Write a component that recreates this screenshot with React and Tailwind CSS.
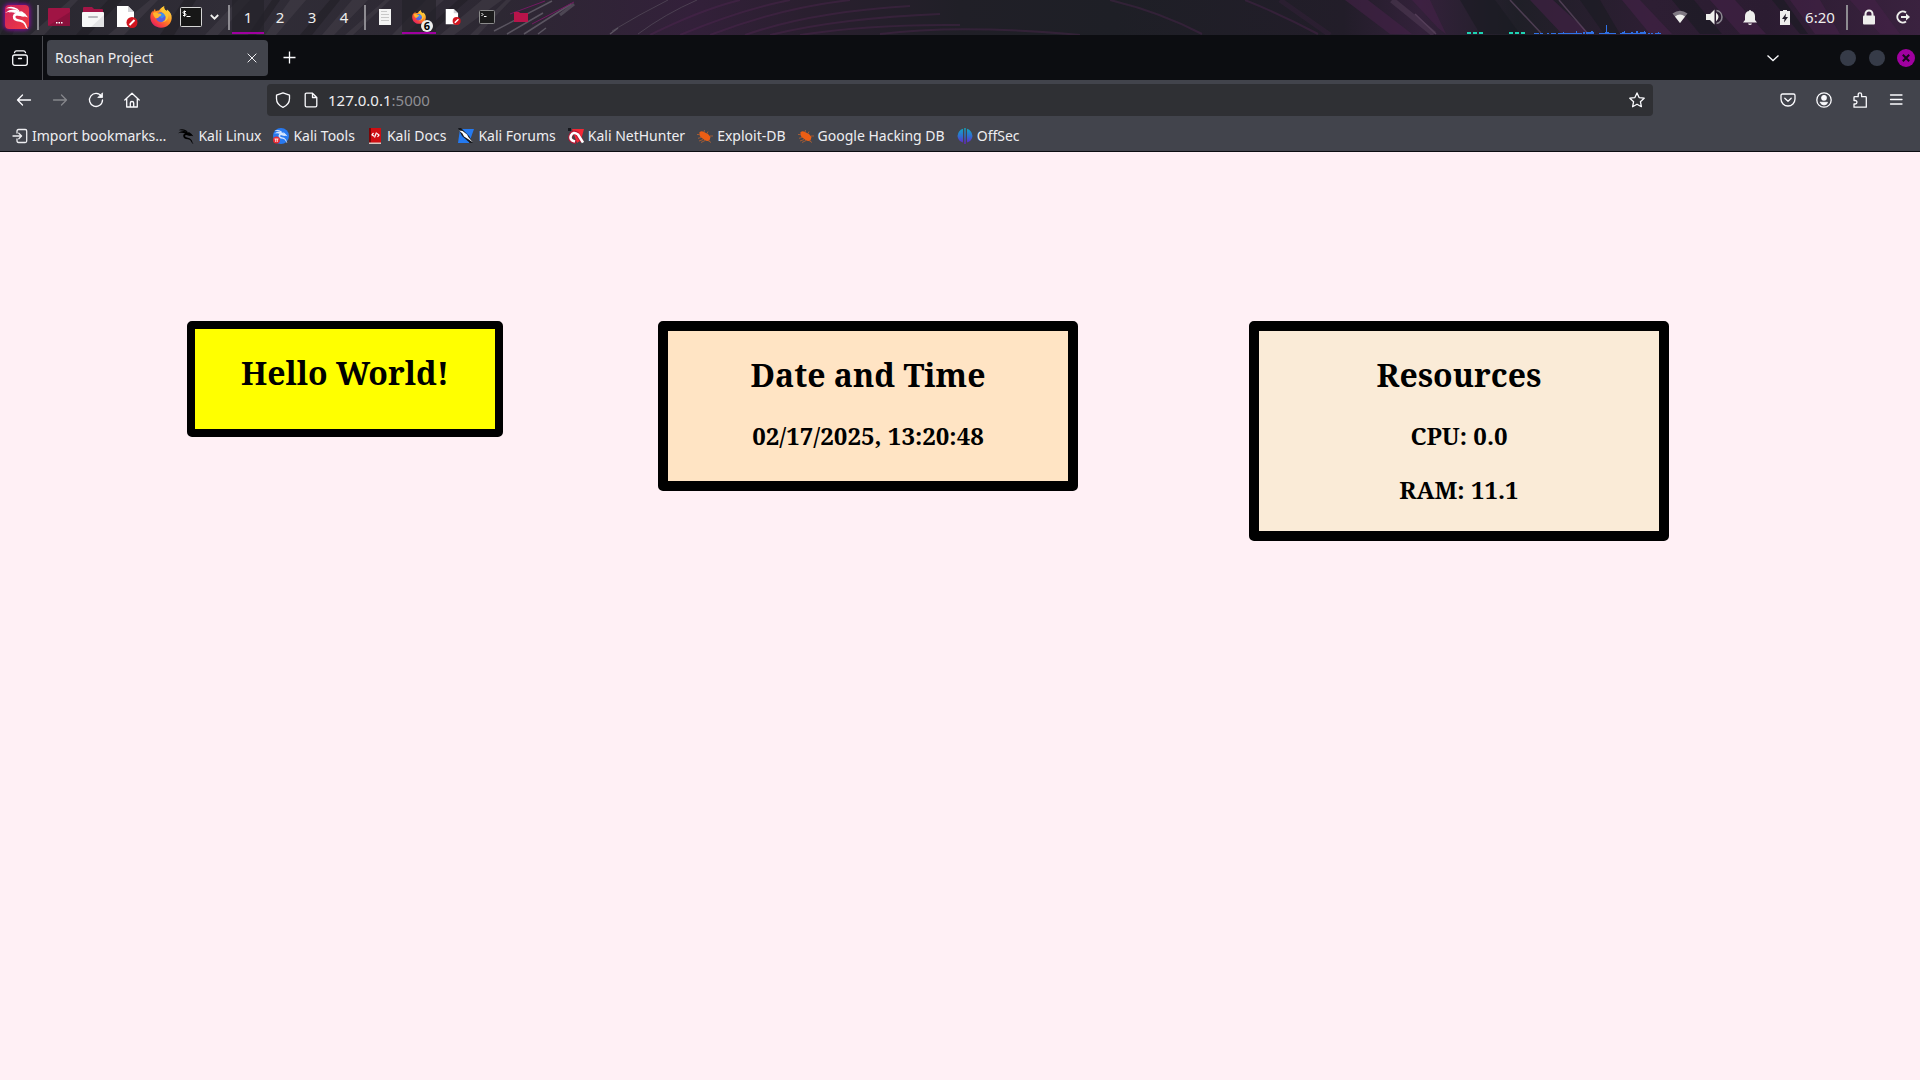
import React from "react";

const uiFont = "font-['Noto_Sans',sans-serif]";
const pageFont = "font-['Noto_Serif','DejaVu_Serif_Condensed','DejaVu_Serif',serif]";

function Wallpaper() {
  return (
    <svg className="absolute inset-0 h-full w-full" viewBox="0 0 1920 35" preserveAspectRatio="none" aria-hidden="true">
      <defs>
        <linearGradient id="sky" x1="0" x2="1" y1="0" y2="0">
          <stop offset="0" stopColor="#29272f" />
          <stop offset="0.12" stopColor="#302d37" />
          <stop offset="0.26" stopColor="#2d2833" />
          <stop offset="0.36" stopColor="#33203a" />
          <stop offset="0.42" stopColor="#2a1f2f" />
          <stop offset="0.5" stopColor="#201f27" />
          <stop offset="0.58" stopColor="#1e1f26" />
          <stop offset="0.7" stopColor="#221d29" />
          <stop offset="0.74" stopColor="#33213a" />
          <stop offset="0.79" stopColor="#1f1f27" />
          <stop offset="0.86" stopColor="#2d1e33" />
          <stop offset="0.92" stopColor="#2b1c31" />
          <stop offset="1" stopColor="#3a223f" />
        </linearGradient>
      </defs>
      <rect width="1920" height="35" fill="url(#sky)" />
      <g fill="#4a4751" opacity="0.4">
        <path d="M30 35 70 0 78 0 44 35ZM108 35 150 0 158 0 124 35ZM205 35 238 0 250 0 218 35ZM265 35 290 0 306 0 276 35ZM322 35 352 0 368 0 334 35ZM345 35 385 0 390 0 353 35ZM392 35 426 0 444 0 404 35ZM440 35 482 0 502 0 454 35ZM470 35 506 0 511 0 478 35Z" />
      </g>
      <g fill="#1d1b22" opacity="0.5">
        <path d="M0 35 20 0 30 0 12 35ZM76 35 108 0 122 0 88 35ZM160 35 184 0 196 0 174 35ZM248 35 272 0 280 0 256 35ZM300 35 330 0 340 0 312 35ZM420 35 458 0 468 0 428 35Z" />
      </g>
      <g fill="none" stroke="#6a6570" opacity="0.75">
        <path d="M494 31 552 1M507 34 543 13M524 34 571 4M538 34 546 28M610 34 618 28" strokeWidth="1.5" />
        <path d="M560 15 574 4" strokeWidth="3" opacity="0.7" />
        <path d="M638 34 Q665 14 697 0M612 31 Q640 14 668 0" strokeWidth="1" opacity="0.6" />
        <path d="M532 24 574 2M510 14 545 1" stroke="#8b1572" strokeWidth="1" />
      </g>
      <g fill="none" stroke="#5a2859" opacity="0.35">
        <path d="M650 35Q700 10 740 0M680 35Q740 10 790 0M710 35Q780 8 850 0M745 35Q810 12 910 6M770 35Q840 18 940 14M800 35Q870 24 960 25M880 34Q960 24 1080 35M1110 0Q1160 12 1202 34M1245 0Q1280 14 1318 34" strokeWidth="2" />
        <path d="M1280 0 1330 35" strokeWidth="5" opacity="0.5" />
      </g>
      <g fill="#452248" opacity="0.6">
        <path d="M1345 0 1390 34 1412 34 1368 0ZM1412 0 1438 28 1446 34 1430 0ZM1530 0 1562 34 1590 34 1553 0ZM1622 0 1650 34 1672 34 1640 0ZM1710 0 1740 34 1766 34 1735 0ZM1790 0 1815 34 1840 34 1820 0ZM1850 0 1880 34 1900 34 1875 0Z" />
      </g>
      <g fill="#191b22" opacity="0.6">
        <path d="M1460 0 1480 34 1520 34 1495 0ZM1580 0 1604 34 1620 34 1600 0ZM1672 0 1700 34 1722 34 1694 0ZM1772 0 1800 34 1808 34 1784 0Z" />
      </g>
      <g fill="none" stroke="#6b526e" opacity="0.6">
        <path d="M1392 0 1434 34" strokeWidth="6" opacity="0.5" />
        <path d="M1510 0 1541 33M1559 0 1588 34M1415 14 1436 34" strokeWidth="1.5" />
      </g>
      <path fill="#1ed3b3" d="M1467 32h4v2h-4zM1473 32h4v2h-4zM1479 32h4v2h-4zM1509 32h4v2h-4zM1515 32h4v2h-4zM1521 32h4v2h-4z" />
      <path
        fill="#2f72e8"
        d="M1534 33h5v1h-5zM1540 33h3v1h-3zM1547 33h2v1h-2zM1551 33h5v1h-5zM1558 33h24v1h-24zM1563 32h1v1h-1zM1576 31h1v2h-1zM1583 32h2v2h-2zM1586 32h8v2h-8zM1591 31h2v1h-2zM1599 33h17v1h-17zM1605 32h4v1h-4zM1606 25h1v8h-1zM1620 33h26v1h-26zM1622 32h3v1h-3zM1624 31h1v1h-1zM1631 32h2v1h-2zM1636 31h2v2h-2zM1640 32h6v1h-6zM1644 31h1v1h-1zM1648 33h2v1h-2zM1651 33h2v1h-2zM1655 33h6v1h-6zM1658 32h1v1h-1z"
      />
    </svg>
  );
}

function Dragon({ className }) {
  return (
    <svg className={className} viewBox="0 0 24 24" fill="currentColor" aria-hidden="true">
      <path d="M1 3.500Q4 1 9 2.200 13 3.200 15 6.500L13 6Q9 2.800 1 3.500Z" />
      <path d="M0 8Q5 3.800 11 4.800L16.500 7.500 20 8.500 23 12.500 21.500 12 20 11.500 17 11.500Q12 9.500 10.500 11.300 10 13.700 13.500 14.300 18 14.800 20 17.500 21.500 19.500 22 22.500L23.500 24Q20.500 23.500 20 20.500 18.800 17.500 15 16.800 7.500 16.300 7.800 11.200 8.200 8.500 11 7.800 6 5.800 0 8Z" />
      <path d="M3.500 7.500Q6 5.500 11 6.500L10.500 8Q7 6.800 3.500 7.500ZM15 6Q17.500 5.700 19.500 8.500L17 9ZM11 8.500 17.500 9 19.500 11.500 12.500 10.500Z" />
    </svg>
  );
}

function Firefox({ className }) {
  return (
    <svg className={className} viewBox="0 0 22 22" aria-hidden="true">
      <defs>
        <linearGradient id="fx" x1="0.85" y1="0.1" x2="0.2" y2="0.9">
          <stop offset="0" stopColor="#ffe14a" />
          <stop offset="0.45" stopColor="#ff8a22" />
          <stop offset="0.8" stopColor="#f8433f" />
          <stop offset="1" stopColor="#e4245e" />
        </linearGradient>
      </defs>
      <path fill="url(#fx)" d="M14.2.3c-.5 2 .5 3.200 1.700 4.300.6-.1.8.2.9.5l.2-1.500c3 2 5 4.900 4.700 8.600C21.300 17.600 17 21.700 11 21.700 5 21.700.5 17.400.3 11.600.2 8.500 1.400 6 2.600 4.700l.2 1.500L5 2.700l.6 2.500c1-.6 2.200-.8 3.400-.6C10 2.800 12 1 14.200.3Z" />
      <circle cx="11" cy="11.300" r="5" fill="#5c5fe0" />
      <path fill="#3f8fee" d="M7 8.500c2-2.500 6.500-2.800 8.400 1.200l-3.600 2.700Z" />
      <path fill="#ffb52e" d="M3 6.800c2-1 4-.7 5.200.8 1.300.1 2.600.2 3.200.8-.2 1.500-2 1.700-2.700 2.500-.2 1.300-1.500 1.200-3.100 1.300C4 10.800 3 8.900 3 6.800Z" />
      <path fill="#ffc531" d="M14.200.3c-.5 2 .5 3.200 1.700 4.300 2.200 2 3.200 4.600 2.100 7.500-1.100 3-4 4.500-7 4.200 4-.8 5.300-3.700 4.400-6.400-.8-2.200-3.400-3.400-4.200-5C10.900 3 12.300 1 14.200.3Z" />
    </svg>
  );
}

function DeniedDoc({ className }) {
  return (
    <svg className={className} viewBox="0 0 22 22" aria-hidden="true">
      <path fill="#fff" d="M1 0h11l6 6v15H1z" />
      <path fill="#d4d4d8" d="m12 0 6 6h-6z" />
      <circle cx="16" cy="16.500" r="5.500" fill="#d2151f" />
      <path stroke="#fff" strokeWidth="2" d="m13.500 19 5-5" />
    </svg>
  );
}

function DesktopFolder() {
  return (
    <svg className="h-[18px] w-[22px]" viewBox="0 0 22 18" aria-hidden="true">
      <rect width="22" height="18" rx="1" fill="#a01444" />
      <path fill="#8a113c" d="M0 18 22 4v13a1 1 0 0 1-1 1Z" />
      <path fill="#fff" d="M8 14h1.500v1.500H8zM10.500 14H12v1.500h-1.500zM13 14h1.500v1.500H13z" />
    </svg>
  );
}

function FilesIcon() {
  return (
    <svg className="h-[22px] w-[22px]" viewBox="0 0 22 22" aria-hidden="true">
      <path fill="#a31546" d="M1 2q0-1 1-1h8l2 2h8q1 0 1 1v6H1Z" />
      <rect y="6" width="22" height="15" rx="1" fill="#f7f7f7" />
      <path fill="#e3e3e5" d="M9 21 22 9v11q0 1-1 1Z" />
      <rect x="6" y="10" width="10" height="2" rx="1" fill="#b9b9bd" />
    </svg>
  );
}

function TerminalIcon({ className }) {
  return (
    <svg className={className} viewBox="0 0 22 20" aria-hidden="true">
      <rect x="0.500" y="0.500" width="21" height="19" rx="1" fill="#171717" stroke="#d6d6d6" />
      <path fill="none" stroke="#fff" d="M6 4.500H4.500Q3 4.500 3 5.500T4.500 6.500 6 7.500 4.500 8.500H3M4.500 3.500v6M6.500 9.500h4" />
    </svg>
  );
}

function LineIcon({ children, className = "h-4 w-4" }) {
  return (
    <svg className={className} viewBox="0 0 16 16" fill="none" stroke="currentColor" strokeWidth="1.3" strokeLinecap="round" strokeLinejoin="round" aria-hidden="true">
      {children}
    </svg>
  );
}

function Divider() {
  return <div className="h-[25px] w-[2px] bg-[#8d8b91]" />;
}

function PanelButton({ label, children, active, width = "w-[34px]" }) {
  return (
    <button aria-label={label} className={`${width} ${active ? "border-b-2 border-[#a000a0] bg-[#24222a]/70 pt-[2px]" : ""} relative flex h-[34px] items-center justify-center`}>
      {children}
    </button>
  );
}

function Taskbar() {
  return (
    <header className="relative flex h-[35px] items-start overflow-hidden text-[#eeeeec]">
      <Wallpaper />
      <div className="relative flex h-[34px] flex-1 items-center">
        <button aria-label="Applications" className="ml-[5px] mr-2 flex h-6 w-6 items-center justify-center rounded-sm bg-linear-to-br from-[#c81d5c] to-[#f43b3e] shadow-[0_0_4px_1px_#8b0aa5]">
          <Dragon className="h-6 w-6 text-white" />
        </button>
        <Divider />
        <div className="ml-[6px] flex items-center">
          <div className="flex items-center gap-[6px]">
            <PanelButton label="Desktop" width="w-7"><DesktopFolder /></PanelButton>
            <PanelButton label="Files" width="w-7"><FilesIcon /></PanelButton>
            <PanelButton label="Text editor" width="w-7"><DeniedDoc className="h-[22px] w-[22px]" /></PanelButton>
            <PanelButton label="Firefox" width="w-7"><Firefox className="h-[22px] w-[22px]" /></PanelButton>
          </div>
          <div className="ml-[2px] flex">
            <PanelButton label="Terminal" width="w-7"><TerminalIcon className="h-5 w-[22px]" /></PanelButton>
            <PanelButton label="More terminals" width="w-[18px]">
              <svg className="h-[6px] w-[9px]" viewBox="0 0 9 6" fill="none" stroke="currentColor" strokeWidth="1.800" aria-hidden="true"><path d="m.8 1 3.700 3.700L8.200 1" /></svg>
            </PanelButton>
          </div>
        </div>
        <div className="ml-[5px]"><Divider /></div>
        <nav aria-label="Workspaces" className={`ml-[2px] flex text-[15px] leading-5 ${uiFont}`}>
          <PanelButton label="Workspace 1" active width="w-8">1</PanelButton>
          <PanelButton label="Workspace 2" width="w-8">2</PanelButton>
          <PanelButton label="Workspace 3" width="w-8">3</PanelButton>
          <PanelButton label="Workspace 4" width="w-8">4</PanelButton>
        </nav>
        <div className="ml-[4px]"><Divider /></div>
        <div className="ml-[2px] flex items-center">
          <PanelButton label="Mousepad">
            <svg className="h-4 w-3" viewBox="0 0 12 16" aria-hidden="true">
              <path fill="#f4f4f4" d="M0 0h12v16H0z" />
              <path stroke="#c9c9c9" d="M2 2.500h6M2 5.500h8M2 8.500h8M2 11.500h8" />
            </svg>
          </PanelButton>
          <PanelButton label="Firefox windows" active>
            <Firefox className="h-[14px] w-[14px]" />
            <span className={`absolute bottom-0 right-[3px] flex h-3 w-3 items-center justify-center rounded-full bg-[#eeeeec] text-[11px] font-bold leading-3 text-black ${uiFont}`}>6</span>
          </PanelButton>
          <PanelButton label="Text editor window"><DeniedDoc className="h-4 w-4" /></PanelButton>
          <PanelButton label="Terminal window">
            <svg className="h-[14px] w-4" viewBox="0 0 16 14" aria-hidden="true">
              <rect x="0.500" y="0.500" width="15" height="13" rx="1" fill="#1b1b1b" stroke="#8b8b8b" />
              <path fill="none" stroke="#fff" d="m2.500 3 1.500 1.500L2.500 6M5 6.500h2.500" />
            </svg>
          </PanelButton>
          <PanelButton label="File manager window">
            <svg className="h-3 w-[14px]" viewBox="0 0 14 12" aria-hidden="true">
              <path fill="#b8144a" d="M0 1h5l1 1h8v9H0z" />
            </svg>
          </PanelButton>
        </div>
      </div>
      <div className="relative flex h-[34px] items-center">
        <PanelButton label="Network" width="w-[35px]">
          <svg className="h-4 w-4" viewBox="0 0 16 16" aria-hidden="true">
            <path fill="#7f7983" d="M.5 4.500Q8-1 15.500 4.500L8 14Z" />
            <path fill="#eeeeec" d="M3 7.500Q8 3.500 13 7.500L8 14Z" />
          </svg>
        </PanelButton>
        <PanelButton label="Volume" width="w-[35px]">
          <svg className="h-4 w-[18px]" viewBox="0 0 18 16" aria-hidden="true">
            <path fill="#eeeeec" d="M0 5h4l4.500-4.500v15L4 11H0zM10 3.500q5 4.500 0 9Z" />
            <path fill="none" stroke="#8b8690" strokeWidth="1.600" d="M10.500 1.500a6.600 6.600 0 0 1 0 13" />
          </svg>
        </PanelButton>
        <PanelButton label="Notifications" width="w-[35px]">
          <svg className="h-4 w-[14px]" viewBox="0 0 14 16" fill="#eeeeec" aria-hidden="true">
            <path d="M7 1a1 1 0 0 1 1 1c2.700.5 4 2.300 4 5v4l2 2.500H0L2 11V7c0-2.700 1.300-4.500 4-5a1 1 0 0 1 1-1ZM5 14.500h4Q8.500 16 7 16t-2-1.500Z" />
          </svg>
        </PanelButton>
        <PanelButton label="Battery" width="w-[35px]">
          <svg className="h-[15px] w-[10px]" viewBox="0 0 10 15" aria-hidden="true">
            <path fill="#eeeeec" d="M3 0h4v1h3v14H0V1h3z" />
            <path fill="#1f1b26" d="M6 3.500 2 9h2.500L4 12.500 8 7H5.500Z" />
          </svg>
        </PanelButton>
        <time className={`w-9 text-center text-[15px] leading-5 ${uiFont}`}>6:20</time>
        <div className="ml-2 mr-1"><Divider /></div>
        <PanelButton label="Lock" width="w-[34px]">
          <svg className="h-4 w-[14px]" viewBox="0 0 14 16" aria-hidden="true">
            <rect x="1" y="6.500" width="12" height="9" rx="1" fill="#eeeeec" />
            <path fill="none" stroke="#eeeeec" strokeWidth="2" d="M3.500 8V5a3.500 3.500 0 0 1 7 0v3" />
          </svg>
        </PanelButton>
        <PanelButton label="Log out" width="w-[34px]">
          <svg className="h-[14px] w-[14px]" viewBox="0 0 14 14" fill="none" stroke="#eeeeec" strokeWidth="2" aria-hidden="true">
            <path d="M10 2.500a5.500 5.500 0 1 0 0 9M5 7h6" />
            <path fill="#eeeeec" stroke="none" d="m10 3.500 4 3.500-4 3.500Z" />
          </svg>
        </PanelButton>
      </div>
    </header>
  );
}

function TabStrip() {
  return (
    <div className="flex h-[45px] items-center bg-[#0c0d11] text-[#fbfbfe]">
      <button aria-label="View recent browsing" className="flex h-[45px] w-[42px] items-center justify-center pr-[2px]">
        <LineIcon>
          <rect x="0.700" y="5" width="14.600" height="10.300" rx="2" />
          <path d="M2.500 2.700Q3 .9 4.500.9h7q1.500 0 2 1.800M6.500 8.500h3" />
        </LineIcon>
      </button>
      <div className="h-[44px] w-px bg-[#4a4b50]" />
      <div className="ml-1 flex h-9 w-[221px] items-center rounded bg-[#42444c] pl-2 pr-[11px]">
        <span className="flex-1 text-[14px] leading-5 text-[#eeeef1]">Roshan Project</span>
        <button aria-label="Close tab">
          <LineIcon className="h-[10px] w-[10px]"><path strokeWidth="1.500" d="m1.500 1.500 13 13m0-13-13 13" /></LineIcon>
        </button>
      </div>
      <button aria-label="New tab" className="ml-[15px]">
        <svg className="h-[13px] w-[13px]" viewBox="0 0 13 13" stroke="currentColor" strokeWidth="1.300" aria-hidden="true"><path d="M6.500.5v12M.5 6.500h12" /></svg>
      </button>
      <div className="flex-1" />
      <button aria-label="List all tabs" className="mr-[61px]">
        <svg className="h-2 w-3" viewBox="0 0 12 8" fill="none" stroke="currentColor" strokeWidth="1.300" aria-hidden="true"><path d="m.5 1.500 5.500 5 5.500-5" /></svg>
      </button>
      <div className="flex items-center gap-3 pr-[5px]">
        <button aria-label="Minimize" className="mr-px h-4 w-4 rounded-full bg-[#363b48]" />
        <button aria-label="Maximize" className="h-4 w-4 rounded-full bg-[#363b48]" />
        <button aria-label="Close window" className="flex h-[18px] w-[18px] items-center justify-center rounded-full bg-[#a000a0]">
          <svg className="h-2 w-2" viewBox="0 0 8 8" stroke="#16081a" strokeWidth="2" aria-hidden="true"><path d="m.8.8 6.400 6.400m0-6.400L.8 7.200" /></svg>
        </button>
      </div>
    </div>
  );
}

function ToolButton({ label, dim, children }) {
  return (
    <button aria-label={label} className={`${dim ? "text-[#85868b]" : ""} flex h-8 w-9 items-center justify-center`}>
      {children}
    </button>
  );
}

function NavBar() {
  return (
    <div className="flex h-10 items-center bg-[#42444c] px-[6px] text-[#fbfbfe]">
      <ToolButton label="Back"><LineIcon><path d="M14.500 8H1.500M6.500 3l-5 5 5 5" /></LineIcon></ToolButton>
      <ToolButton label="Forward" dim><LineIcon><path d="M1.500 8h13M9.500 3l5 5-5 5" /></LineIcon></ToolButton>
      <ToolButton label="Reload">
        <LineIcon><path d="M13.500 4.500A6.500 6.500 0 1 0 14.500 8" /><path d="M14.500 1.200v4.300h-4.300Z" fill="currentColor" strokeWidth="0.800" /></LineIcon>
      </ToolButton>
      <ToolButton label="Home">
        <LineIcon><path d="M.8 8 8 1.200 15.200 8M2.700 6.800V15h10.600V6.800M6.300 15v-4q0-1.500 1.700-1.500T9.700 11v4" /></LineIcon>
      </ToolButton>
      <div className="w-[117px]" />
      <form className="flex h-8 flex-1 items-center rounded bg-[#2f3034] px-2" onSubmit={(e) => e.preventDefault()}>
        <LineIcon><path d="m8 .8 6.500 2.400v3.600c0 4-2.500 6.800-6.500 8.500C4 13.600 1.500 10.800 1.500 6.800V3.200Z" /></LineIcon>
        <LineIcon className="ml-3 h-4 w-4"><path d="M9.500 1.200H3.500q-1.300 0-1.300 1.300v11q0 1.300 1.300 1.300h9q1.300 0 1.300-1.300V5.500ZM9.500 1.200v4.300h4.300" /></LineIcon>
        <label htmlFor="address" className="ml-[9px] text-[15px] leading-5 text-[#eeeef1]">127.0.0.1<span className="text-[#8e8e93]">:5000</span></label>
        <input id="address" className="min-w-0 flex-1 bg-transparent outline-none" />
        <button type="button" aria-label="Bookmark this page">
          <LineIcon><path d="m8 .9 2.100 4.700 5.100.6-3.800 3.500 1 5L8 12.200l-4.400 2.500 1-5L.8 6.200l5.100-.6Z" /></LineIcon>
        </button>
      </form>
      <div className="w-[117px]" />
      <ToolButton label="Save to Pocket">
        <LineIcon><path d="M2.500 2h11q1.500 0 1.500 1.500V7a7 7 0 0 1-14 0V3.500Q1 2 2.500 2Z" /><path d="m4.800 6.200 3.200 3 3.200-3" /></LineIcon>
      </ToolButton>
      <ToolButton label="Account">
        <LineIcon><circle cx="8" cy="8" r="7.200" /><circle cx="8" cy="5.800" r="2.200" fill="currentColor" /><path d="M4.500 10.300h7q-.5 2.700-3.500 2.700t-3.500-2.700Z" fill="currentColor" strokeWidth="0.800" /></LineIcon>
      </ToolButton>
      <ToolButton label="Extensions">
        <LineIcon><path d="M6.200 4.700V2.500a1.700 1.700 0 0 1 3.400 0v2.200h3.900q.8 0 .8.800V15.200H2V12h1.200a1.700 1.700 0 0 0 0-3.500H2V5.500q0-.8.8-.8Z" /></LineIcon>
      </ToolButton>
      <ToolButton label="Menu"><LineIcon><path d="M2.500 3h11.500M2.500 7.500h11.500M2.500 12h11.500" /></LineIcon></ToolButton>
    </div>
  );
}

function Bug() {
  return (
    <svg className="h-4 w-4" viewBox="0 0 16 16" aria-hidden="true">
      <path fill="#ec5e14" d="M2.500 4.500Q4 2.500 7 4l4 2 2.500 3-1 3.500q-2.500 1-5-.5L3.500 9Q2 7 2.500 4.500Z" />
      <path fill="none" stroke="#b9612f" strokeWidth="0.800" d="m7 4 .5-2M10 5.500l1-2M13 8h3M2.500 6.500H0M4 9.500l-3 .8M6 11.500 2 13M8 12.500l-4 2M11 12.500l3 2" />
    </svg>
  );
}

const bookmarks = [
  {
    name: "Import bookmarks…",
    icon: <LineIcon><path d="M5 5V3.200Q5 1.500 6.500 1.500h6.700q1.500 0 1.500 1.500v10q0 1.500-1.500 1.500H6.500Q5 14.500 5 12.800V11M1 8h8M6.800 5.200 9.600 8l-2.800 2.800" /></LineIcon>,
  },
  { name: "Kali Linux", icon: <Dragon className="h-4 w-4 text-black" /> },
  {
    name: "Kali Tools",
    icon: (
      <span className="relative flex h-4 w-4 items-center justify-center rounded-full bg-[#2879f0]">
        <Dragon className="h-[14px] w-[14px] text-[#d5e6ff]" />
        <svg className="absolute bottom-0 left-0 h-2 w-[7px]" viewBox="0 0 7 8" aria-hidden="true"><circle cx="3.500" cy="4" r="3.500" fill="#e92b33" /><path d="M1.500 3h4M2.700 3v3M4.300 3v3" stroke="#fff" strokeWidth="0.800" /></svg>
      </span>
    ),
  },
  {
    name: "Kali Docs",
    icon: (
      <svg className="h-4 w-4" viewBox="0 0 16 16" aria-hidden="true">
        <path fill="#ce0e12" d="M2 0h12v15H2z" /><path fill="#7c0507" d="M2 0h2v15H2z" />
        <path fill="#d8c7c0" d="M2 14.500h12V16H2z" />
        <path fill="none" stroke="#fff" strokeWidth="1.200" d="M6.500 5 5 6.800l2 1.500M10 5.500l2 1.500-1.500 2M9.500 4.500 7.500 9.500" />
      </svg>
    ),
  },
  {
    name: "Kali Forums",
    icon: (
      <svg className="h-4 w-4" viewBox="0 0 16 16" aria-hidden="true">
        <path fill="#257af0" d="M2 1h14L11 15H0z" />
        <path fill="#16181d" d="M0 0h3l8 8 4 7h-3L4 8Z" />
        <path fill="#fff" d="M1 2.500 4.500 3 9 6.500l1.500 2.800L15 14.500l-5-3.500-4-2.500-1.500-3Z" />
      </svg>
    ),
  },
  {
    name: "Kali NetHunter",
    icon: (
      <svg className="h-4 w-4" viewBox="0 0 16 16" aria-hidden="true">
        <path fill="#f32734" d="M4 1h12l-3 11-4 3Z" />
        <path fill="#16181d" d="M0 0h3v3H0z" />
        <path fill="none" stroke="#b61734" strokeWidth="4" d="M8 14Q1 13.500 2.500 8T9 5.500l5 8" />
        <path fill="none" stroke="#fff" strokeWidth="2.600" d="M7 13.500Q1 12 3 7.500T10 6.500l5 8" />
      </svg>
    ),
  },
  { name: "Exploit-DB", icon: <Bug /> },
  { name: "Google Hacking DB", icon: <Bug /> },
  {
    name: "OffSec",
    icon: (
      <svg className="h-4 w-4" viewBox="0 0 16 16" aria-hidden="true">
        <defs><linearGradient id="os" x1="0" y1="0" x2="0" y2="1"><stop offset="0" stopColor="#11a9bf" /><stop offset="0.500" stopColor="#2f6fd0" /><stop offset="1" stopColor="#6a1fc4" /></linearGradient></defs>
        <path fill="url(#os)" d="M6 .8v13.800Q1 13 .5 8 1 2.500 6 .8ZM10 .8v13.800Q15 13 15.500 8 15 2.500 10 .8ZM7.300 0h1.400v16H7.300Z" />
      </svg>
    ),
  },
];

function BookmarksBar() {
  return (
    <nav aria-label="Bookmarks" className="flex h-8 items-center gap-3 border-b border-[#0c0d11] bg-[#42444c] pl-3 text-[#eeeef1]">
      {bookmarks.map((b) => (
        <a key={b.name} href="#" className="flex items-center gap-1 whitespace-nowrap text-[14px] leading-5">
          {b.icon}
          <span>{b.name}</span>
        </a>
      ))}
    </nav>
  );
}

function Card({ title, lines = [], className }) {
  return (
    <section className={`${className} rounded-[5px] border-black pt-[21px]`}>
      <h1 className="text-[32px] leading-[46px]">{title}</h1>
      {lines.map((line) => (
        <h2 key={line} className="mt-[21px] text-[24px] leading-[33px]">{line}</h2>
      ))}
    </section>
  );
}

function Dashboard() {
  return (
    <main className={`grid flex-1 grid-cols-[187fr_316px_155fr_420px_171fr_420px_251fr] items-start bg-[#fff0f5] pt-[169px] text-center font-bold text-black ${pageFont}`}>
      <Card title="Hello World!" className="col-start-2 min-h-[116px] border-8 bg-[#ffff00]" />
      <Card title="Date and Time" lines={["02/17/2025, 13:20:48"]} className="col-start-4 min-h-[170px] border-10 bg-[#ffe4c4]" />
      <Card title="Resources" lines={["CPU: 0.0", "RAM: 11.1"]} className="col-start-6 min-h-[220px] border-10 bg-[#faebd7]" />
    </main>
  );
}

export default function App() {
  return (
    <div className="flex min-h-screen flex-col">
      <Taskbar />
      <div className={uiFont}>
        <TabStrip />
        <NavBar />
        <BookmarksBar />
      </div>
      <Dashboard />
    </div>
  );
}
